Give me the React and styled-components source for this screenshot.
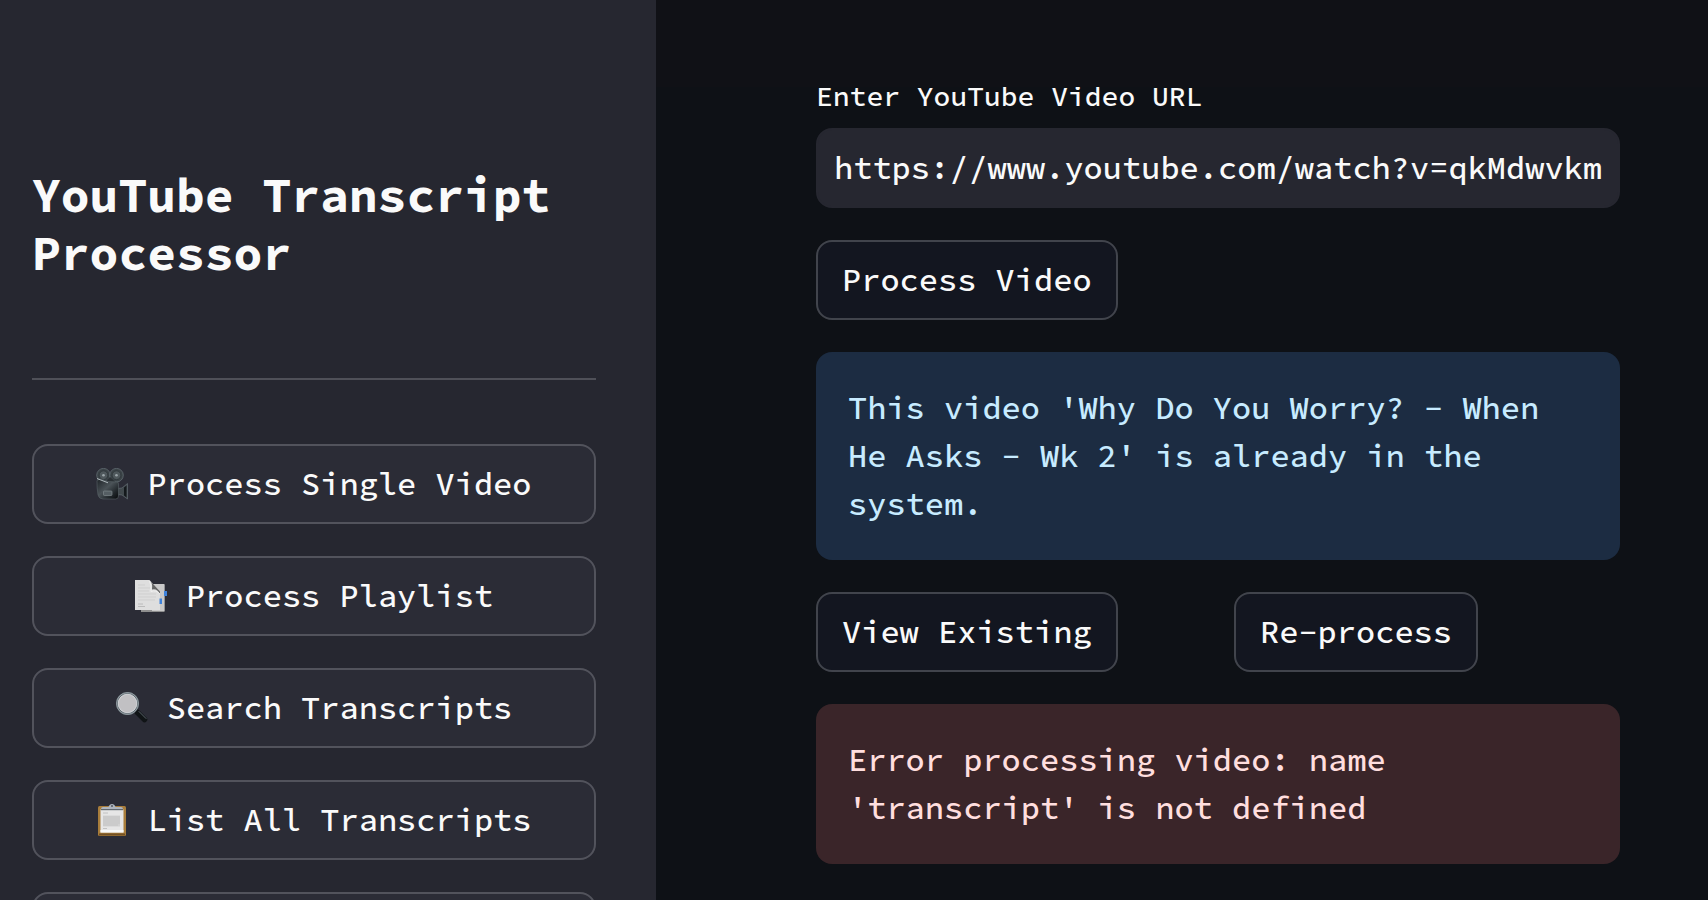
import React from "react";
import styled, { createGlobalStyle } from "styled-components";

const GlobalStyle = createGlobalStyle`
  *, *::before, *::after { box-sizing: border-box; }
  body {
    margin: 0;
    background: #0e1116;
    color: #fafafa;
    font-family: "Source Code Pro", "DejaVu Sans Mono", "Liberation Mono", monospace;
    font-size: 32px;
    font-weight: 500;
    line-height: 48px;
  }
`;

const Page = styled.div`
  display: flex;
  height: 100vh;
  overflow: hidden;
`;

const Sidebar = styled.aside`
  flex: 0 0 656px;
  padding: 166px 60px 0 32px;
  background: #262730;
  overflow: hidden;
`;

const Title = styled.h1`
  margin: 0;
  font-size: 48px;
  line-height: 58px;
  font-weight: 700;
`;

const Divider = styled.hr`
  height: 2px;
  margin: 96px 0 64px;
  border: 0;
  background: #4f5058;
`;

const Nav = styled.nav`
  display: flex;
  flex-direction: column;
  gap: 32px;
`;

const Button = styled.button`
  display: flex;
  align-items: center;
  justify-content: center;
  gap: 19px;
  width: ${(p) => (p.$wide ? "100%" : "auto")};
  height: 80px;
  flex: none;
  padding: 0 24px;
  border: 2px solid ${(p) => (p.$wide ? "#52535c" : "#41444c")};
  border-radius: 16px;
  background: ${(p) => (p.$wide ? "#2b2c36" : "#131620")};
  color: inherit;
  font: inherit;
  white-space: nowrap;
  cursor: pointer;
`;

const Icon = styled.svg`
  width: 32px;
  height: 32px;
  flex: none;
`;

const Main = styled.main`
  flex: 1;
  min-width: 0;
  overflow: hidden;
`;

const Header = styled.header`
  position: relative;
  z-index: 1;
  height: 87px;
  background: #101116;
`;

const Content = styled.div`
  display: flex;
  flex-direction: column;
  align-items: flex-start;
  gap: 32px;
  margin-top: -13px;
  padding: 0 88px 32px 160px;
`;

const Field = styled.div`
  display: flex;
  flex-direction: column;
  gap: 10px;
  width: 100%;
`;

const Label = styled.label`
  font-size: 28px;
  line-height: 44px;
`;

const TextInput = styled.input`
  width: 100%;
  height: 80px;
  padding: 0 14px 0 16px;
  border: 2px solid #262730;
  border-radius: 16px;
  outline: 0;
  background: #262730;
  color: inherit;
  font: inherit;
`;

const Alert = styled.div`
  width: 100%;
  padding: 32px;
  border-radius: 16px;
  background: ${(p) => (p.$error ? "#3a2529" : "#1c2c42")};
  color: ${(p) => (p.$error ? "#ffdede" : "#c7ebff")};
`;

const Columns = styled.div`
  display: grid;
  grid-template-columns: 1fr 1fr;
  justify-items: start;
  gap: 32px;
  width: 100%;
`;

const CameraIcon = () => (
  <Icon viewBox="0 0 32 32" aria-hidden="true">
    <defs>
      <linearGradient id="cam" x1="0" y1="0" x2="1" y2="1">
        <stop offset="0" stopColor="#1d2226" />
        <stop offset=".45" stopColor="#4b5358" />
        <stop offset=".75" stopColor="#20262a" />
        <stop offset="1" stopColor="#07090b" />
      </linearGradient>
    </defs>
    {[7.5, 20.5].map((x) => (
      <g key={x}>
        <circle cx={x} cy="7.2" r="6.8" fill="#3b4347" stroke="#69747a" strokeWidth=".7" />
        <circle cx={x} cy="7.2" r="4.4" fill="#4f585c" stroke="#30383c" strokeWidth="1" />
        <circle cx={x} cy="7.2" r="1.3" fill="#9ba5a9" />
      </g>
    ))}
    <path d="M9 14.500 14 9l6 5.500z" fill="#2a3034" />
    <path d="M21.500 20.500 26 20l5.500-4.500v15.500L26 27l-4.500-.5z" fill="#41494d" stroke="#69747a" strokeWidth=".6" />
    <path d="M28 19.500 30.500 17.500v12L28 27.500z" fill="#14191c" />
    <path d="M1 12.500 4 11l8 2.500 9 .5q1.500 0 1.500 2v12q0 3-3 3H7q-4 0-5-4-1.200-7-1-14.500z" fill="url(#cam)" stroke="#596368" strokeWidth=".6" />
    <path d="M1 10.500 12 14.800" stroke="#b0b9bd" strokeWidth="1" />
    <rect x="7.500" y="23" width="8.500" height="4.500" rx=".8" fill="#555e63" stroke="#8a9397" strokeWidth=".6" />
  </Icon>
);

const PagesIcon = () => (
  <Icon viewBox="0 0 32 32" aria-hidden="true">
    <path d="M6 5h23.500v27H6z" fill="#8f8f8f" />
    <path d="M17 4h12.500v27H17z" fill="#c9c9c9" />
    <path d="M29 11h3v5h-3z" fill="#3f83dc" />
    <path d="M0 0h14.500L25 11.500v18.500H0z" fill="#dedede" />
    <path d="M14.500 0q3.500 3 2.500 9.500 5-1.500 8 4.500V11.500z" fill="#656565" />
    <path d="M14.500 1q2 4 1.500 10.500Q21 9.500 25 14" fill="none" stroke="#f4f4f4" strokeWidth=".8" />
    <path d="M3 5h7M3 8h12M3 11h11M3 14h18M3 17h18M3 20h17" stroke="#cfcfcf" strokeWidth="1" />
    <path d="M3 24h5M3 26.500h7" stroke="#b2b2b2" strokeWidth=".8" />
    <path d="M24.500 18.500h2.500v5.500h-2.500z" fill="#3f83dc" />
  </Icon>
);

const SearchIcon = () => (
  <Icon viewBox="0 0 32 32" aria-hidden="true">
    <path d="m18.500 17.500 3 3" stroke="#9da3a6" strokeWidth="3" />
    <path d="m21.500 20.500 7 7" stroke="#101416" strokeWidth="5.500" strokeLinecap="round" />
    <path d="m23 19.500 7 7" stroke="#59636a" strokeWidth="1" strokeLinecap="round" />
    <circle cx="11.500" cy="11.500" r="10.500" fill="#c1c0c3" stroke="#59646a" strokeWidth="2" />
    <circle cx="11.500" cy="11.500" r="10.900" fill="none" stroke="#aab4ba" strokeWidth=".8" />
    <circle cx="11.500" cy="11.500" r="9.300" fill="none" stroke="#dfe3e6" strokeWidth=".7" />
  </Icon>
);

const ClipboardIcon = () => (
  <Icon viewBox="0 0 32 32" aria-hidden="true">
    <rect x="2" y="2" width="28" height="30" rx="1.500" fill="#a87d3b" />
    <path d="M3 29.500h26v2H3z" fill="#735023" />
    <path d="M4.500 5.500h23v23h-23z" fill="#e6e6e6" />
    <path d="M4.500 26h23v2.500h-23z" fill="#f9f9f9" />
    <path d="M7 9h5M7 24.500h4" stroke="#b7b7b7" strokeWidth=".8" />
    <path d="M7 11.500h17v11H7z" fill="#d2d2d2" />
    <path d="M7 13h17M7 15h17M7 17h17M7 19h17M7 21h15" stroke="#c0c0c0" strokeWidth=".8" />
    <path d="M5 5q0-2 2-2h5.500q1-3 3.500-3t3.500 3H25q2 0 2 2z" fill="#aeb5bf" />
    <path d="M5 5h22v1.200H5z" fill="#626970" />
    <circle cx="16" cy="2" r="1" fill="#535a60" />
  </Icon>
);

const NAV_ITEMS = [
  { label: "Process Single Video", Glyph: CameraIcon },
  { label: "Process Playlist", Glyph: PagesIcon },
  { label: "Search Transcripts", Glyph: SearchIcon },
  { label: "List All Transcripts", Glyph: ClipboardIcon },
];

export default function App() {
  return (
    <>
      <GlobalStyle />
      <Page>
        <Sidebar>
          <Title>YouTube Transcript Processor</Title>
          <Divider />
          <Nav>
            {NAV_ITEMS.map(({ label, Glyph }) => (
              <Button key={label} type="button" $wide>
                <Glyph />
                {label}
              </Button>
            ))}
            <Button type="button" $wide />
          </Nav>
        </Sidebar>
        <Main>
          <Header />
          <Content>
            <Field>
              <Label htmlFor="video-url">Enter YouTube Video URL</Label>
              <TextInput
                id="video-url"
                type="text"
                defaultValue="https://www.youtube.com/watch?v=qkMdwvkm"
              />
            </Field>
            <Button type="button">Process Video</Button>
            <Alert role="status">
              This video 'Why Do You Worry? - When He Asks - Wk 2' is already in the system.
            </Alert>
            <Columns>
              <Button type="button">View Existing</Button>
              <Button type="button">Re-process</Button>
            </Columns>
            <Alert role="alert" $error>
              Error processing video: name 'transcript' is not defined
            </Alert>
          </Content>
        </Main>
      </Page>
    </>
  );
}
